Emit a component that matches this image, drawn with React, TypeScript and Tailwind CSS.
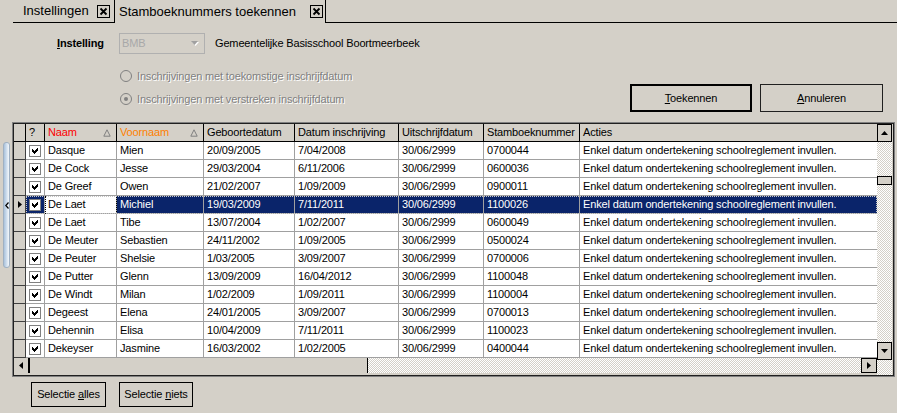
import React from "react";

const rows = [
  ["Dasque", "Mien", "20/09/2005", "7/04/2008", "30/06/2999", "0700044"],
  ["De Cock", "Jesse", "29/03/2004", "6/11/2006", "30/06/2999", "0600036"],
  ["De Greef", "Owen", "21/02/2007", "1/09/2009", "30/06/2999", "0900011"],
  ["De Laet", "Michiel", "19/03/2009", "7/11/2011", "30/06/2999", "1100026"],
  ["De Laet", "Tibe", "13/07/2004", "1/02/2007", "30/06/2999", "0600049"],
  ["De Meuter", "Sebastien", "24/11/2002", "1/09/2005", "30/06/2999", "0500024"],
  ["De Peuter", "Shelsie", "1/03/2005", "3/09/2007", "30/06/2999", "0700006"],
  ["De Putter", "Glenn", "13/09/2009", "16/04/2012", "30/06/2999", "1100048"],
  ["De Windt", "Milan", "1/02/2009", "1/09/2011", "30/06/2999", "1100004"],
  ["Degeest", "Elena", "24/01/2005", "3/09/2007", "30/06/2999", "0700013"],
  ["Dehennin", "Elisa", "10/04/2009", "7/11/2011", "30/06/2999", "1100023"],
  ["Dekeyser", "Jasmine", "16/03/2002", "1/02/2005", "30/06/2999", "0400044"],
];

const ACTIE = "Enkel datum ondertekening schoolreglement invullen.";
const SELECTED = 3;

// column widths incl. the right grid line
const W = ["w-[72px]", "w-[87px]", "w-[91px]", "w-[104px]", "w-[85px]", "w-[96px]", "w-[297px]"];

const checker = "bg-[repeating-conic-gradient(#d4d0c8_0%_25%,#ffffff_0%_50%)] bg-[length:2px_2px]";

function CloseBox({ className = "" }: { className?: string }) {
  return (
    <div className={`w-[13px] h-[13px] border border-black bg-[#d4d0c8] flex items-center justify-center ${className}`}>
      <svg width="9" height="9" viewBox="0 0 9 9">
        <path d="M1.5 1.5L7.5 7.5M7.5 1.5L1.5 7.5" stroke="#000" strokeWidth="1.8" />
      </svg>
    </div>
  );
}

function Check() {
  return (
    <div className="w-[12px] h-[12px] border border-[#808080] bg-white flex items-center justify-center">
      <svg width="10" height="10" viewBox="0 0 10 10" shapeRendering="crispEdges">
        <path d="M2 3h1v1h1v1h1V4h1V3h1V2h1v3H7v1H6v1H5v1H4V7H3V6H2z" fill="#000" />
      </svg>
    </div>
  );
}

function SortMark() {
  return (
    <svg width="8" height="8" viewBox="0 0 8 8" className="ml-auto mr-[5px]">
      <path d="M4 0.8L7.2 7.2H0.8Z" fill="none" stroke="#808080" strokeWidth="1" />
    </svg>
  );
}

function Tri({ dir }: { dir: "up" | "down" | "left" | "right" }) {
  const d = {
    up: "M3.5 0L7 4H0Z",
    down: "M0 0H7L3.5 4Z",
    left: "M4 0V7L0 3.5Z",
    right: "M0 0V7L4 3.5Z",
  }[dir];
  const v = dir === "up" || dir === "down";
  return (
    <svg width={v ? 7 : 4} height={v ? 4 : 7} viewBox={v ? "0 0 7 4" : "0 0 4 7"}>
      <path d={d} fill="#000" />
    </svg>
  );
}

function Radio({ label, checked }: { label: string; checked?: boolean }) {
  return (
    <div className="flex items-center h-[16px] gap-[5px]">
      <div className="w-[12px] h-[12px] rounded-full border border-[#808080] flex items-center justify-center">
        {checked && <div className="w-[4px] h-[4px] rounded-full bg-[#808080]" />}
      </div>
      <span className="text-[#808080] [text-shadow:1px_1px_0_#ffffff]">{label}</span>
    </div>
  );
}

export default function App() {
  return (
    <div className="w-[897px] h-[413px] bg-[#d4d0c8] overflow-hidden flex flex-col font-['Liberation_Sans',Arial,sans-serif] text-[11px] tracking-[-0.15px] text-black">
      {/* tabs */}
      <div className="flex h-[23px] shrink-0 text-[13px] tracking-normal">
        <div className="w-[13px]" />
        <div className="w-[101px] flex items-center border-b border-black pl-[10px]">
          <span>Instellingen</span>
          <CloseBox className="ml-auto mr-[4px]" />
        </div>
        <div className="w-[212px] flex items-center border-x border-black pl-[4px]">
          <span>Stamboeknummers toekennen</span>
          <CloseBox className="ml-auto mr-[2px]" />
        </div>
        <div className="flex-1 border-b border-black" />
      </div>

      {/* instelling */}
      <div className="flex items-center h-[21px] mt-[10px] pl-[57px] shrink-0">
        <span className="w-[62px] font-bold">
          <u>I</u>nstelling
        </span>
        <div className="w-[86px] h-full border border-[#b0b0b0] flex items-center pl-[2px] pr-[5px] text-[#a8a8a8]">
          <span className="flex-1">BMB</span>
          <svg width="8" height="5" viewBox="0 0 8 5">
            <path d="M1 1H8L4.5 5Z" fill="#ffffff" />
            <path d="M0 0H7L3.5 4Z" fill="#a0a0a0" />
          </svg>
        </div>
        <span className="ml-[10px]">Gemeentelijke Basisschool Boortmeerbeek</span>
      </div>

      {/* radios + buttons */}
      <div className="flex h-[68px] shrink-0">
        <div className="pl-[120px] pt-[14px] flex flex-col gap-[7px]">
          <Radio label="Inschrijvingen met toekomstige inschrijfdatum" />
          <Radio checked label="Inschrijvingen met verstreken inschrijfdatum" />
        </div>
        <div className="ml-auto mr-[14px] mt-[30px] flex gap-[8px] h-[28px]">
          <button className="w-[122px] border-2 border-black bg-[#d4d0c8]">
            <u>T</u>oekennen
          </button>
          <button className="w-[123px] border border-[#202020] bg-[#d4d0c8]">
            <u>A</u>nnuleren
          </button>
        </div>
      </div>

      {/* grid */}
      <div className="flex h-[255px] shrink-0">
        <div className="w-[12px] pl-[3px] pt-[20px]">
          <div className="w-[7px] h-[126px] rounded-[3px] border border-[#9fb0c2] bg-gradient-to-r from-[#a9c2dc] to-[#f4f8fc] flex items-center justify-center">
            <svg width="4" height="7" viewBox="0 0 4 7">
              <path d="M3.5 0.5L0.8 3.5L3.5 6.5" fill="none" stroke="#000" strokeWidth="1.2" />
            </svg>
          </div>
        </div>
        <div className="w-[883px] border border-[#808080]">
          <div className="h-full border border-[#202020] flex">
            <div className="w-[863px] flex flex-col">
              {/* header */}
              <div className="flex h-[18px] border-b border-black bg-[#d4d0c8]">
                <div className="w-[12px] border-r border-black" />
                <div className="w-[19px] border-r border-black pl-[3px] flex items-center">?</div>
                <div className={`${W[0]} border-r border-black pl-[3px] flex items-center text-[#ff0000]`}>
                  Naam
                  <SortMark />
                </div>
                <div className={`${W[1]} border-r border-black pl-[3px] flex items-center text-[#ff8000]`}>
                  Voornaam
                  <SortMark />
                </div>
                <div className={`${W[2]} border-r border-black pl-[3px] flex items-center`}>Geboortedatum</div>
                <div className={`${W[3]} border-r border-black pl-[3px] flex items-center`}>Datum inschrijving</div>
                <div className={`${W[4]} border-r border-black pl-[3px] flex items-center`}>Uitschrijfdatum</div>
                <div className={`${W[5]} border-r border-black pl-[3px] flex items-center`}>Stamboeknummer</div>
                <div className={`${W[6]} pl-[3px] flex items-center`}>Acties</div>
              </div>

              {/* rows */}
              {rows.map((r, i) => {
                const sel = i === SELECTED;
                return (
                  <div key={i} className="flex h-[18px]">
                    <div className="w-[12px] shrink-0 bg-[#d4d0c8] border-r border-b border-[#404040] flex items-center justify-center">
                      {sel && <Tri dir="right" />}
                    </div>
                    <div
                      className={`flex flex-1 whitespace-nowrap overflow-hidden ${
                        sel
                          ? "bg-[#0a246a] text-white outline outline-1 outline-dotted outline-[#c8c8c8] -outline-offset-1"
                          : "bg-white"
                      }`}
                    >
                      <div className="w-[19px] shrink-0 border-r border-b border-[#a0a0a0] flex items-center justify-center">
                        <Check />
                      </div>
                      <div
                        className={`${W[0]} shrink-0 border-r border-b border-[#a0a0a0] pl-[3px] flex items-center ${
                          sel ? "bg-white text-black outline outline-1 outline-dotted outline-black -outline-offset-1" : ""
                        }`}
                      >
                        {r[0]}
                      </div>
                      {r.slice(1).map((c, j) => (
                        <div key={j} className={`${W[j + 1]} shrink-0 border-r border-b border-[#a0a0a0] pl-[3px] flex items-center`}>
                          {c}
                        </div>
                      ))}
                      <div className={`${W[6]} shrink-0 border-b border-[#a0a0a0] pl-[3px] flex items-center overflow-hidden`}>
                        {ACTIE}
                      </div>
                    </div>
                  </div>
                );
              })}

              {/* horizontal scrollbar */}
              <div className="flex h-[15px]">
                <div className="w-[16px] border-r-2 border-black bg-[#d4d0c8] flex items-center justify-center">
                  <Tri dir="left" />
                </div>
                <div className="w-[338px] border-r border-black bg-[#d4d0c8]" />
                <div className={`flex-1 ${checker}`} />
                <div className="w-[16px] border border-black bg-[#d4d0c8] flex items-center justify-center">
                  <Tri dir="right" />
                </div>
              </div>
            </div>

            {/* vertical scrollbar */}
            <div className="w-[15px] flex flex-col">
              <div className="h-[18px] border border-black bg-[#d4d0c8] flex items-center justify-center">
                <Tri dir="up" />
              </div>
              <div className={`flex-1 ${checker}`}>
                <div className="mt-[34px] h-[9px] border border-black bg-[#d4d0c8]" />
              </div>
              <div className="h-[18px] border border-black bg-[#d4d0c8] flex items-center justify-center">
                <Tri dir="down" />
              </div>
              <div className={`h-[15px] ${checker}`} />
            </div>
          </div>
        </div>
      </div>

      {/* bottom buttons */}
      <div className="flex gap-[13px] pl-[31px] mt-[5px] shrink-0">
        <button className="w-[75px] h-[25px] border border-black bg-[#d4d0c8]">
          Selectie <u>a</u>lles
        </button>
        <button className="w-[74px] h-[25px] border border-black bg-[#d4d0c8]">
          Selectie <u>n</u>iets
        </button>
      </div>
    </div>
  );
}
